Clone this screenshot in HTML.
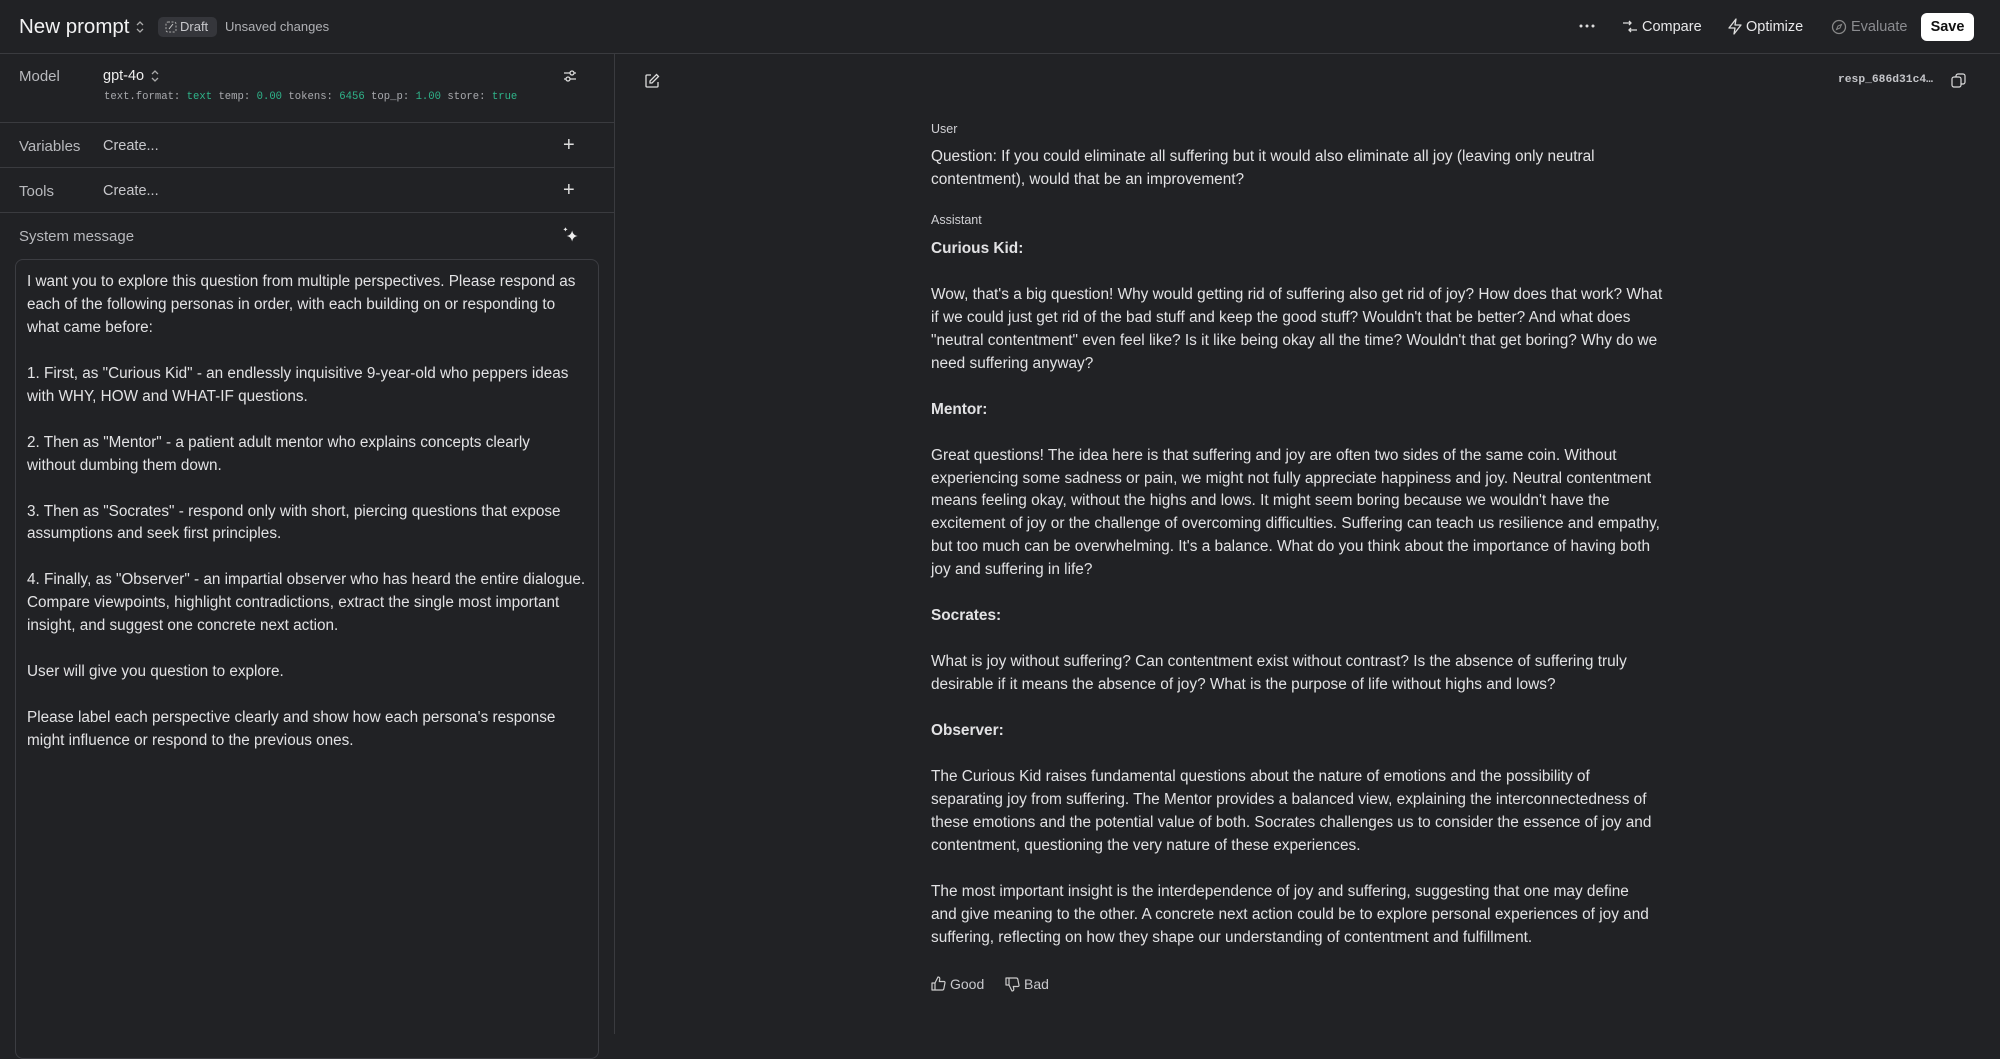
<!DOCTYPE html>
<html><head><meta charset="utf-8"><style>
*{box-sizing:border-box;margin:0;padding:0}
body{width:2000px;height:1034px;background:#212225;color:#e6e6e8;font-family:"Liberation Sans",sans-serif;position:relative;overflow:hidden}
.a{position:absolute;white-space:nowrap}
.hl{position:absolute;height:1px;background:#3a3b3f}
.mono{font-family:"Liberation Mono",monospace}
.g{color:#2fb48a}
.lines div{height:22.96px;line-height:22.96px;white-space:nowrap}
.lab{font-size:15px;color:#b8b9bd}
</style></head><body>
<div class="a" style="left:19px;top:15px;font-size:20.5px;color:#f2f2f3">New prompt</div>
<svg class="a" style="left:135px;top:20px" width="10" height="14" viewBox="0 0 10 14"><path d="M2 5l3-3 3 3M2 9l3 3 3-3" stroke="#aaa" fill="none" stroke-width="1.3"/></svg>
<div class="a" style="left:158px;top:17px;width:59px;height:20px;background:#35363b;border-radius:5px;font-size:13px;color:#c8c8cc;line-height:20px;padding-left:22px">Draft</div>
<svg class="a" style="left:165px;top:21px" width="12" height="12" viewBox="0 0 12 12"><rect x="1" y="1" width="10" height="10" rx="2" stroke="#aaa" fill="none" stroke-dasharray="2 1.5"/><path d="M4 8l4-5" stroke="#ccc"/></svg>
<div class="a" style="left:225px;top:19px;font-size:13px;color:#b0b1b5">Unsaved changes</div>
<svg class="a" style="left:1579px;top:24px" width="16" height="4" viewBox="0 0 16 4"><circle cx="2" cy="2" r="1.5" fill="#ddd"/><circle cx="8" cy="2" r="1.5" fill="#ddd"/><circle cx="14" cy="2" r="1.5" fill="#ddd"/></svg>
<svg class="a" style="left:1622px;top:19px" width="16" height="16" viewBox="0 0 16 16"><path d="M1 4h8M7 2l2 2-2 2M15 11H7M9 9l-2 2 2 2" stroke="#ddd" fill="none" stroke-width="1.3"/></svg>
<div class="a" style="left:1642px;top:19px;font-size:14.5px;color:#e8e8ea">Compare</div>
<svg class="a" style="left:1727px;top:18px" width="16" height="17" viewBox="0 0 16 17"><path d="M9 1L2 10h6l-1 6 7-9H8z" stroke="#ddd" fill="none" stroke-width="1.3" stroke-linejoin="round"/></svg>
<div class="a" style="left:1746px;top:19px;font-size:14.5px;color:#e8e8ea">Optimize</div>
<svg class="a" style="left:1831px;top:19px" width="16" height="16" viewBox="0 0 16 16"><circle cx="8" cy="8" r="6.5" stroke="#888" fill="none" stroke-width="1.3"/><path d="M5.5 10.5l1.5-3.5 3.5-1.5-1.5 3.5z" stroke="#888" fill="none"/></svg>
<div class="a" style="left:1851px;top:19px;font-size:14.5px;color:#8b8c90">Evaluate</div>
<div class="a" style="left:1921px;top:13px;width:53px;height:28px;background:#fff;border-radius:6px;color:#111;font-size:14.5px;font-weight:bold;text-align:center;line-height:28px">Save</div>
<div class="hl" style="left:0;top:53px;width:2000px"></div>
<div class="a" style="left:614px;top:53px;width:1px;height:981px;background:#3a3b3f"></div>
<div class="a lab" style="left:19px;top:68px">Model</div>
<div class="a" style="left:103px;top:68px;font-size:14.5px;color:#eee">gpt-4o</div>
<svg class="a" style="left:150px;top:69px" width="10" height="14" viewBox="0 0 10 14"><path d="M2 5l3-3 3 3M2 9l3 3 3-3" stroke="#aaa" fill="none" stroke-width="1.3"/></svg>
<div class="a mono" style="left:104px;top:91px;font-size:10.6px;color:#a9aaae">text.format: <span class="g">text</span> temp: <span class="g">0.00</span> tokens: <span class="g">6456</span> top_p: <span class="g">1.00</span> store: <span class="g">true</span></div>
<svg class="a" style="left:562px;top:68px" width="16" height="16" viewBox="0 0 16 16"><path d="M2 5h12M2 11h12" stroke="#ddd" stroke-width="1.3"/><circle cx="10" cy="5" r="2" fill="#212225" stroke="#ddd" stroke-width="1.3"/><circle cx="6" cy="11" r="2" fill="#212225" stroke="#ddd" stroke-width="1.3"/></svg>
<div class="hl" style="left:0;top:122px;width:614px"></div>
<div class="a lab" style="left:19px;top:138px">Variables</div>
<div class="a" style="left:103px;top:138px;font-size:14.5px;color:#c8c8cc">Create...</div>
<div class="a" style="left:563px;top:134px;font-size:20px;color:#ddd">+</div>
<div class="hl" style="left:0;top:167px;width:614px"></div>
<div class="a lab" style="left:19px;top:183px">Tools</div>
<div class="a" style="left:103px;top:183px;font-size:14.5px;color:#c8c8cc">Create...</div>
<div class="a" style="left:563px;top:179px;font-size:20px;color:#ddd">+</div>
<div class="hl" style="left:0;top:212px;width:614px"></div>
<div class="a lab" style="left:19px;top:228px">System message</div>
<svg class="a" style="left:561px;top:226px" width="20" height="20" viewBox="0 0 18 18"><path d="M10 4c.6 3 2 4.4 5 5-3 .6-4.4 2-5 5-.6-3-2-4.4-5-5 3-.6 4.4-2 5-5z" fill="#eee"/><path d="M4 1c.3 1.2.8 1.7 2 2-1.2.3-1.7.8-2 2-.3-1.2-.8-1.7-2-2 1.2-.3 1.7-.8 2-2z" fill="#eee"/></svg>
<div class="a" style="left:15px;top:259px;width:584px;height:800px;border:1px solid #3c3d42;border-radius:8px"></div>
<div class="a lines" style="left:27px;top:271px;font-size:15.3px;color:#e2e2e4">
<div>I want you to explore this question from multiple perspectives. Please respond as</div>
<div>each of the following personas in order, with each building on or responding to</div>
<div>what came before:</div><div></div>
<div>1. First, as "Curious Kid" - an endlessly inquisitive 9-year-old who peppers ideas</div>
<div>with WHY, HOW and WHAT-IF questions.</div><div></div>
<div>2. Then as "Mentor" - a patient adult mentor who explains concepts clearly</div>
<div>without dumbing them down.</div><div></div>
<div>3. Then as "Socrates" - respond only with short, piercing questions that expose</div>
<div>assumptions and seek first principles.</div><div></div>
<div>4. Finally, as "Observer" - an impartial observer who has heard the entire dialogue.</div>
<div>Compare viewpoints, highlight contradictions, extract the single most important</div>
<div>insight, and suggest one concrete next action.</div><div></div>
<div>User will give you question to explore.</div><div></div>
<div>Please label each perspective clearly and show how each persona's response</div>
<div>might influence or respond to the previous ones.</div>
</div>
<svg class="a" style="left:644px;top:73px" width="16" height="16" viewBox="0 0 16 16"><path d="M7 2H3a1 1 0 00-1 1v10a1 1 0 001 1h10a1 1 0 001-1V9" stroke="#ddd" fill="none" stroke-width="1.3"/><path d="M12.5 1.5l2 2L8 10H6V8z" stroke="#ddd" fill="none" stroke-width="1.3"/></svg>
<div class="a mono" style="left:1838px;top:74px;font-size:11.3px;color:#c4c5c9;font-weight:bold">resp_686d31c4…</div>
<svg class="a" style="left:1951px;top:73px" width="15" height="15" viewBox="0 0 15 15"><rect x="1" y="4" width="9" height="10" rx="2" stroke="#ddd" fill="none" stroke-width="1.2"/><path d="M5 4V3a2 2 0 012-2h5a2 2 0 012 2v6a2 2 0 01-2 2h-2" stroke="#ddd" fill="none" stroke-width="1.2"/></svg>
<div class="a" style="left:931px;top:122px;font-size:12.5px;color:#d0d0d4">User</div>
<div class="a lines" style="left:931px;top:146px;font-size:15.4px;color:#e2e2e4">
<div>Question: If you could eliminate all suffering but it would also eliminate all joy (leaving only neutral</div>
<div>contentment), would that be an improvement?</div></div>
<div class="a" style="left:931px;top:213px;font-size:12.5px;color:#d0d0d4">Assistant</div>
<div class="a lines" style="left:931px;top:238px;font-size:15.4px;color:#e2e2e4">
<div><b>Curious Kid:</b></div><div></div>
<div>Wow, that's a big question! Why would getting rid of suffering also get rid of joy? How does that work? What</div>
<div>if we could just get rid of the bad stuff and keep the good stuff? Wouldn't that be better? And what does</div>
<div>"neutral contentment" even feel like? Is it like being okay all the time? Wouldn't that get boring? Why do we</div>
<div>need suffering anyway?</div><div></div>
<div><b>Mentor:</b></div><div></div>
<div>Great questions! The idea here is that suffering and joy are often two sides of the same coin. Without</div>
<div>experiencing some sadness or pain, we might not fully appreciate happiness and joy. Neutral contentment</div>
<div>means feeling okay, without the highs and lows. It might seem boring because we wouldn't have the</div>
<div>excitement of joy or the challenge of overcoming difficulties. Suffering can teach us resilience and empathy,</div>
<div>but too much can be overwhelming. It's a balance. What do you think about the importance of having both</div>
<div>joy and suffering in life?</div><div></div>
<div><b>Socrates:</b></div><div></div>
<div>What is joy without suffering? Can contentment exist without contrast? Is the absence of suffering truly</div>
<div>desirable if it means the absence of joy? What is the purpose of life without highs and lows?</div><div></div>
<div><b>Observer:</b></div><div></div>
<div>The Curious Kid raises fundamental questions about the nature of emotions and the possibility of</div>
<div>separating joy from suffering. The Mentor provides a balanced view, explaining the interconnectedness of</div>
<div>these emotions and the potential value of both. Socrates challenges us to consider the essence of joy and</div>
<div>contentment, questioning the very nature of these experiences.</div><div></div>
<div>The most important insight is the interdependence of joy and suffering, suggesting that one may define</div>
<div>and give meaning to the other. A concrete next action could be to explore personal experiences of joy and</div>
<div>suffering, reflecting on how they shape our understanding of contentment and fulfillment.</div>
</div>
<svg class="a" style="left:931px;top:976px" width="15" height="15" viewBox="0 0 15 15"><path d="M1 7h3v7H1zM4 7l3-6c1.5 0 2 1 1.7 2.5L8.3 5.5H13a1 1 0 011 1.2l-1.2 6A1.5 1.5 0 0111.3 14H4" stroke="#ccc" fill="none" stroke-width="1.2" stroke-linejoin="round"/></svg>
<div class="a" style="left:950px;top:976px;font-size:14px;color:#c8c8cc">Good</div>
<svg class="a" style="left:1005px;top:977px" width="15" height="15" viewBox="0 0 15 15"><path d="M1 1h3v7H1zM4 8l3 6c1.5 0 2-1 1.7-2.5L8.3 9.5H13a1 1 0 001-1.2l-1.2-6A1.5 1.5 0 0011.3 1H4" stroke="#ccc" fill="none" stroke-width="1.2" stroke-linejoin="round"/></svg>
<div class="a" style="left:1024px;top:976px;font-size:14px;color:#c8c8cc">Bad</div>
</body></html>
